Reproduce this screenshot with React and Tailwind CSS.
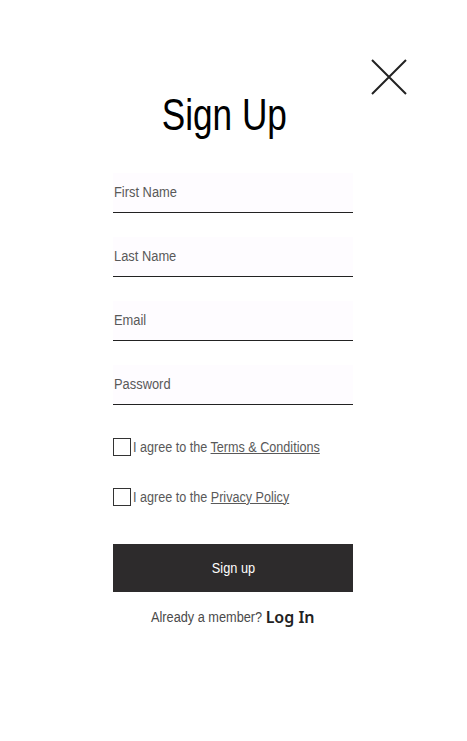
export default function App() {
  const fields = ['First Name', 'Last Name', 'Email', 'Password']
  return (
    <div className="relative min-h-[741px] w-full bg-white font-['Liberation_Sans',Arial,sans-serif]">
      <button className="absolute left-[371px] top-[59px] w-[36px] h-[36px]">
        <svg viewBox="0 0 36 36" width="36" height="36" fill="none" stroke="#222" strokeWidth="2">
          <path d="M1 1L35 35M35 1L1 35" />
        </svg>
      </button>
      <div className="ml-[113px] w-[240px] pt-[87px]">
        <h1 className="text-center text-[44px] leading-[56px] text-black -ml-[17px]">
          <span className="inline-block scale-x-[0.8] origin-center">Sign Up</span>
        </h1>
        <div className="mt-[30px] flex flex-col gap-[24px]">
          {fields.map((f) => (
            <div key={f} className="h-[40px] bg-[#fefcff] border-b border-[#222] flex items-center px-px">
              <span className="inline-block scale-x-[0.92] origin-left text-[14px] leading-[21px] text-[#595959]">{f}</span>
            </div>
          ))}
        </div>
        <div className="mt-[33px] h-[18px] flex items-center">
          <span className="shrink-0 w-[18px] h-[18px] border border-[#333] bg-white"></span>
          <span className="ml-[2px] inline-block whitespace-nowrap scale-x-[0.9] origin-left text-[14px] leading-[21px] text-[#595959]">
            I agree to the <span className="underline">Terms &amp; Conditions</span>
          </span>
        </div>
        <div className="mt-[32px] h-[18px] flex items-center">
          <span className="shrink-0 w-[18px] h-[18px] border border-[#333] bg-white"></span>
          <span className="ml-[2px] inline-block whitespace-nowrap scale-x-[0.9] origin-left text-[14px] leading-[21px] text-[#595959]">
            I agree to the <span className="underline">Privacy Policy</span>
          </span>
        </div>
        <button className="mt-[38px] w-full h-[48px] bg-[#2d2b2c] text-white text-[15px] flex items-center justify-center">
          <span className="inline-block scale-x-[0.85] origin-center">Sign up</span>
        </button>
        <div className="mt-[15px] h-[21px] flex items-center justify-center gap-[3px]">
          <span className="-ml-[11px] inline-block whitespace-nowrap scale-x-[0.91] origin-right text-[14px] leading-[21px] text-[#4a4a4a]">Already a member?</span>
          <span className="font-['Noto_Sans',sans-serif] font-semibold text-[16px] leading-[21px] text-[#222]">Log In</span>
        </div>
      </div>
    </div>
  )
}
